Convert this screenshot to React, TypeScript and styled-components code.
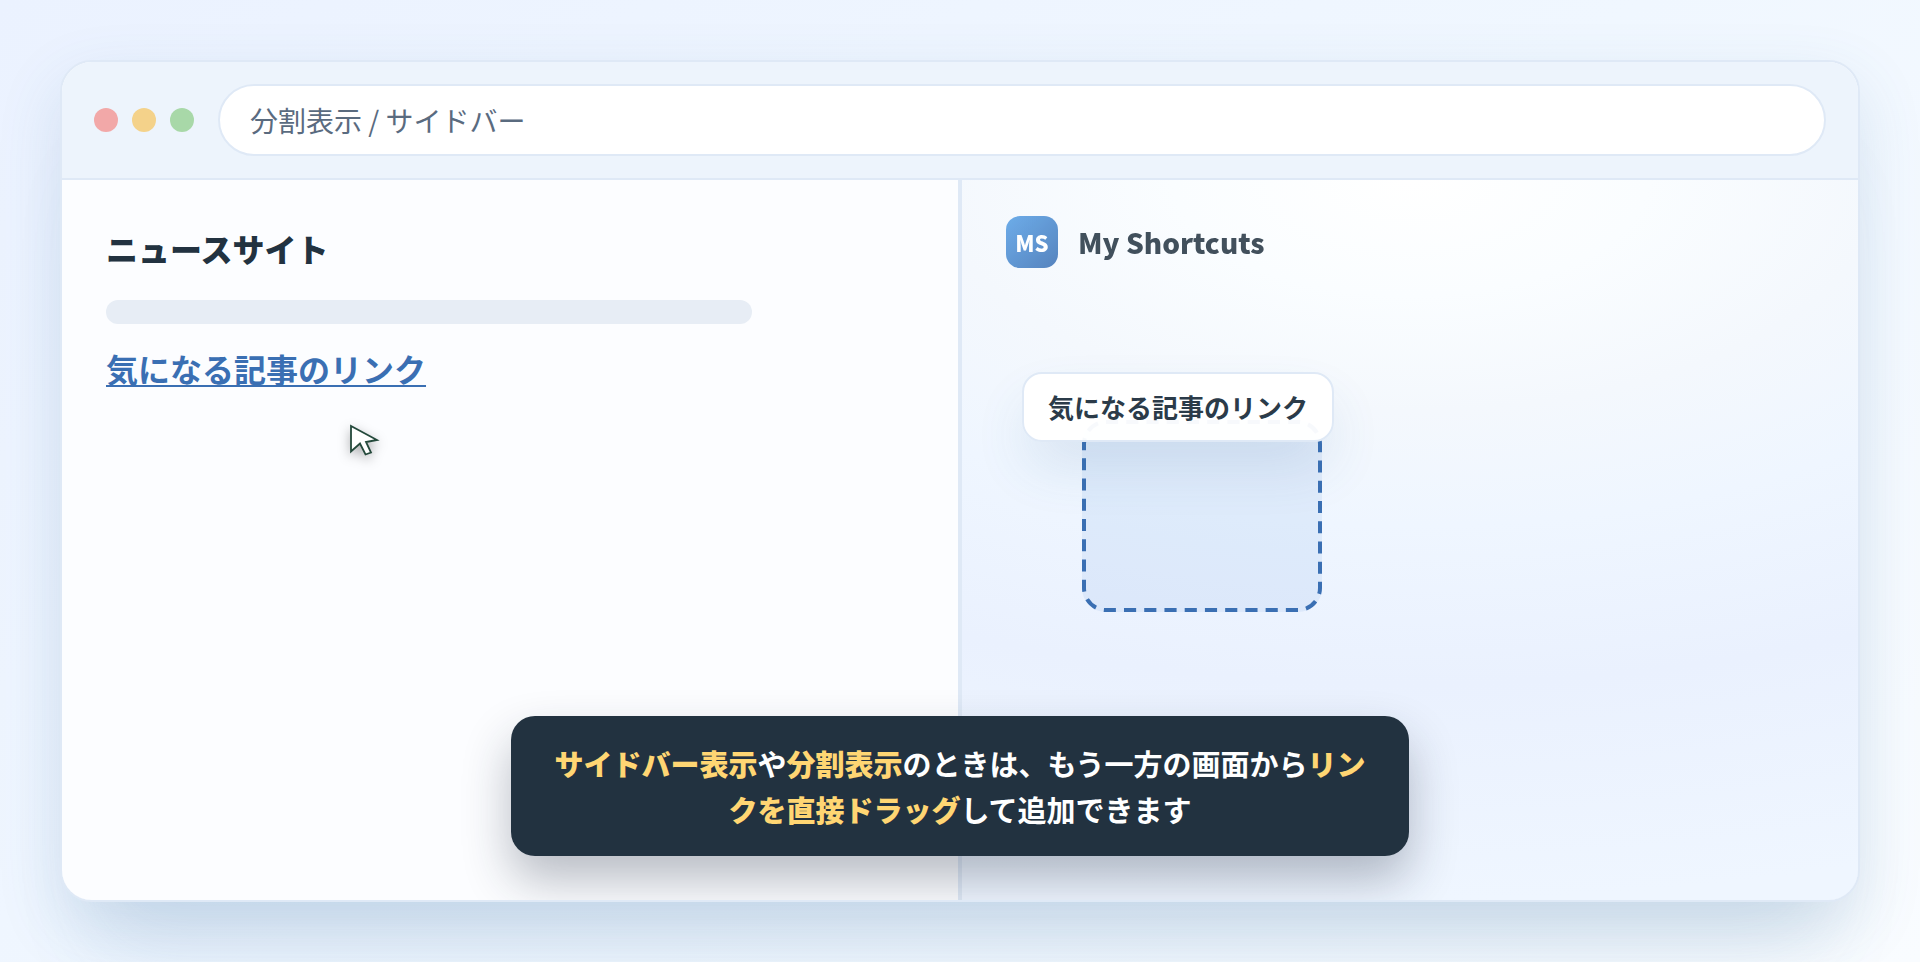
import React from "react";
import styled, { createGlobalStyle } from "styled-components";

const colors = {
  ink: "#223240",
  line: "#dfe9f6",
  blue: "#3a6fb3",
  accent: "#ffd673",
};

const GlobalStyle = createGlobalStyle`
  *, *::before, *::after { box-sizing: border-box; }
  body {
    margin: 0;
    color: ${colors.ink};
    font-family: "Noto Sans CJK JP", "Noto Sans", sans-serif;
  }
`;

const Page = styled.main`
  display: flex;
  min-height: 100vh;
  padding: 60px;
  background: linear-gradient(145deg, #ebf2ff 0%, #f0f7ff 50%, #f9fcff 100%);
`;

const BrowserWindow = styled.section`
  display: flex;
  flex: 1;
  flex-direction: column;
  overflow: hidden;
  border: 2px solid ${colors.line};
  border-radius: 32px;
  background: #fcfdff;
  box-shadow:
    0 24px 64px rgba(58, 111, 160, 0.15),
    0 80px 80px -40px rgba(58, 111, 160, 0.14);
`;

const Toolbar = styled.header`
  display: flex;
  align-items: center;
  gap: 24px;
  padding: 22px 32px;
  border-bottom: 2px solid ${colors.line};
  background: #edf4fc;
`;

const Lights = styled.div`
  display: flex;
  gap: 14px;
`;

const Light = styled.span<{ $color: string }>`
  width: 24px;
  height: 24px;
  border-radius: 50%;
  background: ${(p) => p.$color};
`;

const Address = styled.input`
  flex: 1;
  min-width: 0;
  height: 72px;
  padding: 0 30px;
  border: 2px solid ${colors.line};
  border-radius: 36px;
  background: #fff;
  color: #5a6b7f;
  font-family: inherit;
  font-size: 28px;
`;

const Split = styled.div`
  position: relative;
  display: grid;
  flex: 1;
  grid-template-columns: 1fr 1fr;
  gap: 4px;
  background: ${colors.line};
`;

const SitePane = styled.article`
  padding: 44px;
  background: #fcfdff;
`;

const SiteTitle = styled.h1`
  margin: 0 0 28px;
  font-size: 32px;
  font-weight: 900;
  line-height: 48px;
`;

const Placeholder = styled.div`
  width: 80%;
  height: 24px;
  margin-bottom: 20px;
  border-radius: 12px;
  background: #e7edf5;
`;

const ArticleLink = styled.a`
  color: ${colors.blue};
  font-size: 32px;
  font-weight: 700;
  line-height: 48px;
  text-decoration-thickness: 2px;
  text-decoration-skip-ink: none;
  text-underline-offset: 3px;
`;

const Pointer = styled.svg`
  position: absolute;
  top: 240px;
  left: 284px;
  width: 40px;
  height: 40px;
  overflow: visible;
  filter: drop-shadow(0 4px 6px rgba(0, 0, 0, 0.3));
`;

const ShortcutsPane = styled.aside`
  padding: 36px 44px;
  background: radial-gradient(
    165% 100% at 50% 0%,
    #ffffff 0%,
    #fafdff 16%,
    #f4f8fd 32%,
    #eff6ff 48%,
    #eaf1fe 70%,
    #eff6ff 100%
  );
`;

const Brand = styled.header`
  display: flex;
  align-items: center;
  gap: 20px;
  opacity: 0.85;
`;

const Logo = styled.span`
  display: grid;
  place-items: center;
  width: 52px;
  height: 52px;
  border-radius: 14px;
  background: linear-gradient(135deg, #559fe6, #3a6fb3);
  color: #fff;
  font-size: 22px;
  font-weight: 900;
`;

const BrandName = styled.h2`
  margin: 0;
  font-size: 28px;
  font-weight: 900;
  line-height: 48px;
`;

const DropZone = styled.div`
  position: relative;
  width: 240px;
  height: 192px;
  margin: 152px 0 0 76px;
  border-radius: 24px;
  background: rgba(90, 150, 220, 0.11);
`;

const DropOutline = styled.svg`
  display: block;
  width: 100%;
  height: 100%;
`;

const DragChip = styled.div`
  position: absolute;
  top: -48px;
  left: -60px;
  padding: 9px 24px;
  border: 2px solid ${colors.line};
  border-radius: 20px;
  background: rgba(255, 255, 255, 0.96);
  box-shadow: 0 28px 56px -8px rgba(58, 111, 160, 0.16);
  color: #2b3b49;
  font-size: 26px;
  font-weight: 700;
  line-height: 48px;
  white-space: nowrap;
`;

const Caption = styled.p`
  position: absolute;
  bottom: 44px;
  left: 25%;
  width: 50%;
  margin: 0;
  padding: 24px 42px;
  border-radius: 24px;
  background: ${colors.ink};
  box-shadow: 0 24px 48px rgba(30, 40, 60, 0.3);
  color: #fff;
  font-size: 29px;
  font-weight: 700;
  line-height: 46px;
  text-align: center;
`;

const Mark = styled.strong`
  color: ${colors.accent};
  font-weight: 900;
`;

export default function App() {
  return (
    <>
      <GlobalStyle />
      <Page>
        <BrowserWindow>
          <Toolbar>
            <Lights>
              <Light $color="#f2a8a8" />
              <Light $color="#f4d28a" />
              <Light $color="#a8d8a8" />
            </Lights>
            <Address aria-label="アドレス" readOnly value="分割表示 / サイドバー" />
          </Toolbar>
          <Split>
            <SitePane>
              <SiteTitle>ニュースサイト</SiteTitle>
              <Placeholder />
              <ArticleLink href="#article">気になる記事のリンク</ArticleLink>
            </SitePane>
            <ShortcutsPane>
              <Brand>
                <Logo>MS</Logo>
                <BrandName>My Shortcuts</BrandName>
              </Brand>
              <DropZone>
                <DropOutline viewBox="0 0 240 192" aria-hidden="true">
                  <rect
                    x="2"
                    y="2"
                    width="236"
                    height="188"
                    rx="22"
                    fill="none"
                    stroke={colors.blue}
                    strokeWidth="4"
                    pathLength={400}
                    strokeDasharray="6 4"
                  />
                </DropOutline>
                <DragChip>気になる記事のリンク</DragChip>
              </DropZone>
            </ShortcutsPane>
            <Pointer viewBox="0 0 40 40" aria-hidden="true">
              <path
                d="M5 6V31.5L14 23.5L19.5 34.5L25 32.5L20 22L31 20Z"
                fill="#fff"
                stroke="#24493b"
                strokeWidth="1.8"
              />
            </Pointer>
            <Caption>
              <Mark>サイドバー表示</Mark>や<Mark>分割表示</Mark>
              のときは、もう一方の画面から<Mark>リンクを直接ドラッグ</Mark>
              して追加できます
            </Caption>
          </Split>
        </BrowserWindow>
      </Page>
    </>
  );
}
